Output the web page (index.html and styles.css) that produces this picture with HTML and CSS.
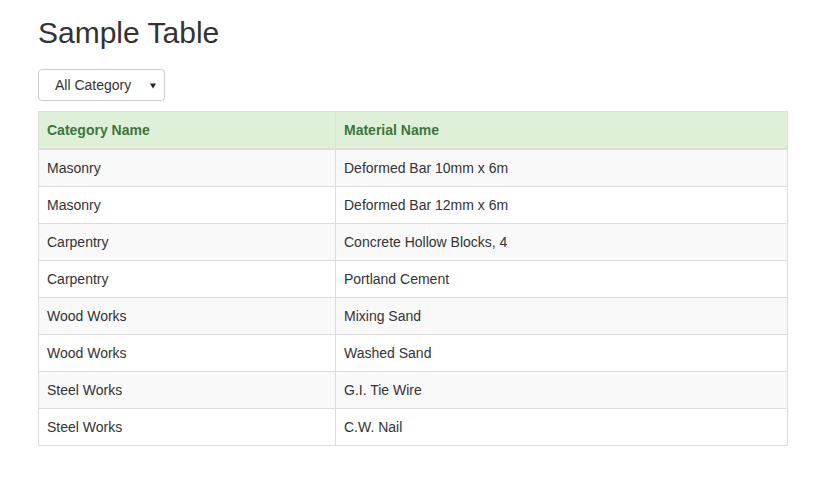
FILE: index.html
```html
<!DOCTYPE html>
<html>
<head>
<meta charset="utf-8">
<title>Sample Table</title>
<link rel="stylesheet" href="styles.css">
</head>
<body>
<div class="page">
  <h2 class="title">Sample Table</h2>
  <div class="select">
    <span class="select-text">All Category</span>
    <svg class="select-arrow" width="6" height="6" viewBox="0 0 6 6"><path d="M0 0.5 L6 0.5 L3 5.5 Z" fill="#222"/></svg>
  </div>
  <table class="data-table">
    <colgroup><col class="col-a"><col class="col-b"></colgroup>
    <thead>
      <tr><th>Category Name</th><th>Material Name</th></tr>
    </thead>
    <tbody>
      <tr><td>Masonry</td><td>Deformed Bar 10mm x 6m</td></tr>
      <tr><td>Masonry</td><td>Deformed Bar 12mm x 6m</td></tr>
      <tr><td>Carpentry</td><td>Concrete Hollow Blocks, 4</td></tr>
      <tr><td>Carpentry</td><td>Portland Cement</td></tr>
      <tr><td>Wood Works</td><td>Mixing Sand</td></tr>
      <tr><td>Wood Works</td><td>Washed Sand</td></tr>
      <tr><td>Steel Works</td><td>G.I. Tie Wire</td></tr>
      <tr><td>Steel Works</td><td>C.W. Nail</td></tr>
    </tbody>
  </table>
</div>
</body>
</html>
```

FILE: styles.css
```css
html, body {
  margin: 0;
  padding: 0;
  background: #fff;
}
body {
  font-family: "Liberation Sans", Arial, sans-serif;
  font-size: 14px;
  line-height: 20px;
  color: #333;
}
.page {
  width: 750px;
  margin-left: 38px;
  padding-top: 16px;
}
.title {
  margin: 0 0 20px 0;
  font-size: 30px;
  line-height: 33px;
  font-weight: 500;
  color: #333;
}
.select {
  box-sizing: border-box;
  width: 127px;
  height: 32px;
  border: 1px solid #ccc;
  border-radius: 4px;
  display: flex;
  align-items: center;
  justify-content: space-between;
  padding: 0 8px 0 16px;
  color: #333;
  background: #fff;
}
.select-text {
  font-size: 14px;
}
.select-arrow {
  display: block;
  margin-top: 1px;
}
.data-table {
  margin-top: 10px;
  width: 750px;
  table-layout: fixed;
  border-collapse: separate;
  border-spacing: 0;
  border: 1px solid #ddd;
}
.col-a { width: 297px; }
.col-b { width: 451px; }
.data-table th,
.data-table td {
  padding: 8px;
  text-align: left;
  line-height: 20px;
  vertical-align: top;
  border-top: 1px solid #ddd;
}
.data-table th:first-child,
.data-table td:first-child {
  border-right: 1px solid #ddd;
}
.data-table th {
  border-top: 0;
  background: #dff0d8;
  color: #3c763d;
  font-weight: bold;
  border-bottom: 1px solid #ddd;
}
.data-table tbody tr:first-child td {
  border-top: 1px solid #ddd;
}
.data-table tbody tr:nth-child(odd) td {
  background: #f9f9f9;
}
```
